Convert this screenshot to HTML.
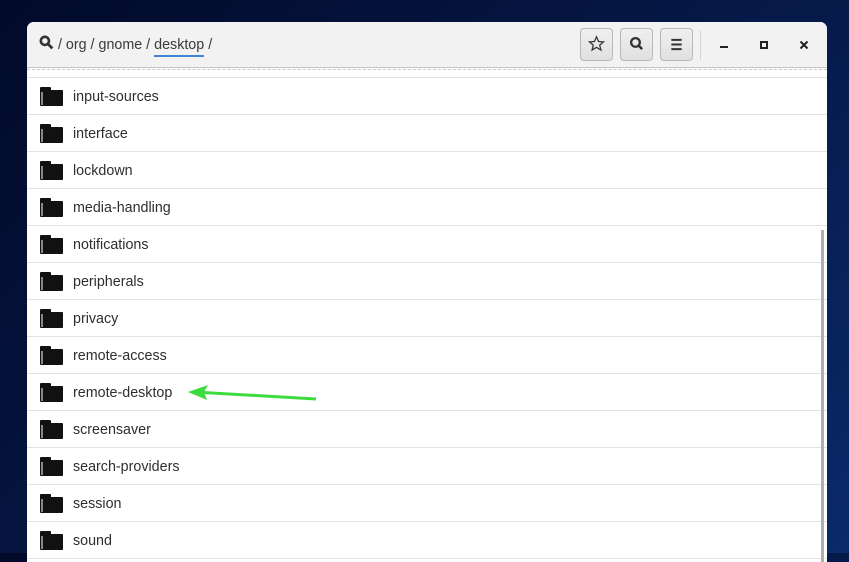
<!DOCTYPE html><html><head><style>
body{margin:0;width:849px;height:553px;overflow:hidden;background:linear-gradient(135deg,#020a2a 0%,#061a4a 60%,#0a2a6a 100%);font-family:"Liberation Sans","DejaVu Sans",sans-serif;position:relative}
.win{position:absolute;left:27px;top:22px;width:800px;height:540px;background:#fff;border-radius:7px 7px 0 0;overflow:hidden}
.hdr{height:45px;background:#f2f2f2;border-bottom:1px solid #c4c4c4;position:relative}
.dash{position:absolute;top:47px;left:0;right:0;border-top:1px dashed #c9c9c9}
.path{position:absolute;left:12px;top:13px;font-size:14.3px;color:#3a3a3a}
.path u{text-decoration:none;border-bottom:2px solid #3d86d4;padding-bottom:2px}
.btn{position:absolute;top:6px;width:33px;height:33px;border:1px solid #b8b8b8;border-radius:4px;background:linear-gradient(#f0f0f0,#e0e0e0);box-sizing:border-box}
.row{position:absolute;left:0;width:800px;height:37px;border-bottom:1px solid #e2e2e2;box-sizing:border-box;font-size:14.3px;color:#2e2e2e}
.row span{position:absolute;left:46px;top:11px}
.fold{position:absolute;left:13px;top:12px;width:23px;height:16px;background:#111;border-radius:1px}
.fold:before{content:"";position:absolute;left:0;top:-3px;width:11px;height:4px;background:#111;border-radius:1px 1px 0 0}
.fold:after{content:"";position:absolute;left:1px;top:2px;width:2px;height:13px;background:#888}
</style></head><body>
<div class="win">
<div class="hdr">
<div class="path"><svg width="15" height="15" viewBox="0 0 14 14" style="vertical-align:-1px"><circle cx="5.5" cy="5.5" r="3.8" fill="none" stroke="#333" stroke-width="2.4"/><path d="M8 8l4.5 4.5" stroke="#333" stroke-width="2.6"/></svg> / org / gnome / <u>desktop</u> /</div>
<div class="btn" style="left:553px"><svg width="31" height="31" viewBox="0 0 30 30"><path d="M15 7.5l2 4.6 4.8.4-3.7 3.1 1.2 4.8L15 17.8l-4.3 2.6 1.2-4.8-3.7-3.1 4.8-.4z" fill="none" stroke="#333" stroke-width="1.2"/></svg></div>
<div class="btn" style="left:593px"><svg width="31" height="31" viewBox="0 0 30 30"><circle cx="14" cy="13" r="4.2" fill="none" stroke="#333" stroke-width="2.2"/><path d="M17 16l3.5 3.5" stroke="#333" stroke-width="2.4"/></svg></div>
<div class="btn" style="left:633px"><svg width="31" height="31" viewBox="0 0 30 30"><path d="M10 10.5h10M10 15h10M10 19.5h10" stroke="#333" stroke-width="2"/></svg></div>
<div style="position:absolute;left:673px;top:8px;width:1px;height:30px;background:#d6d6d6"></div>
<div style="position:absolute;left:693px;top:24px;width:8px;height:2px;background:#222"></div>
<div style="position:absolute;left:733px;top:19px;width:4px;height:4px;border:2px solid #222"></div>
<svg style="position:absolute;left:772px;top:18px" width="10" height="10"><path d="M1.5 1.5l7 7M8.5 1.5l-7 7" stroke="#222" stroke-width="2"/></svg>
</div>
<div class="dash"></div>
<div style="position:absolute;top:55px;left:0;width:800px;border-top:1px solid #e2e2e2"></div>
<div class="row" style="top:56px"><i class="fold"></i><span>input-sources</span></div>
<div class="row" style="top:93px"><i class="fold"></i><span>interface</span></div>
<div class="row" style="top:130px"><i class="fold"></i><span>lockdown</span></div>
<div class="row" style="top:167px"><i class="fold"></i><span>media-handling</span></div>
<div class="row" style="top:204px"><i class="fold"></i><span>notifications</span></div>
<div class="row" style="top:241px"><i class="fold"></i><span>peripherals</span></div>
<div class="row" style="top:278px"><i class="fold"></i><span>privacy</span></div>
<div class="row" style="top:315px"><i class="fold"></i><span>remote-access</span></div>
<div class="row" style="top:352px"><i class="fold"></i><span>remote-desktop</span></div>
<div class="row" style="top:389px"><i class="fold"></i><span>screensaver</span></div>
<div class="row" style="top:426px"><i class="fold"></i><span>search-providers</span></div>
<div class="row" style="top:463px"><i class="fold"></i><span>session</span></div>
<div class="row" style="top:500px"><i class="fold"></i><span>sound</span></div>
<div style="position:absolute;left:794px;top:208px;width:3px;height:340px;background:#aeb0ae"></div>
</div>
<svg style="position:absolute;left:185px;top:384px" width="135" height="20"><path d="M131 15L18 8.5" stroke="#3ddc3d" stroke-width="3"/><path d="M3 8l20-7-4 7 3 8z" fill="#3ddc3d"/></svg>
</body></html>
